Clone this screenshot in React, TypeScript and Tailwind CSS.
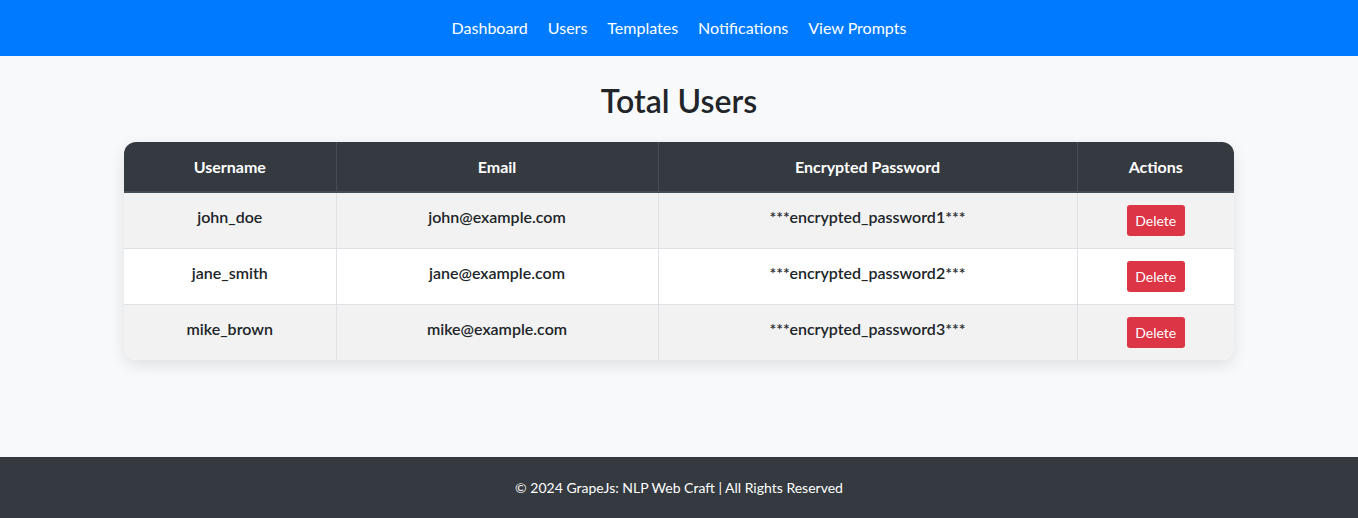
const users = [
  { username: 'john_doe', email: 'john@example.com', password: '***encrypted_password1***' },
  { username: 'jane_smith', email: 'jane@example.com', password: '***encrypted_password2***' },
  { username: 'mike_brown', email: 'mike@example.com', password: '***encrypted_password3***' },
];

const navLinks = ['Dashboard', 'Users', 'Templates', 'Notifications', 'View Prompts'];

export default function App() {
  return (
    <div className="min-h-screen flex flex-col bg-[#f8f9fa] text-[#212529] font-['Lato',sans-serif]">
      {/* Navbar */}
      <nav className="h-[56px] bg-[#007bff] flex items-center justify-center gap-5">
        {navLinks.map((link) => (
          <a key={link} href="#" className="text-white text-[16px] leading-6">
            {link}
          </a>
        ))}
      </nav>

      {/* Main */}
      <main className="flex-1 pt-[26px] pb-[97px]">
        <h2 className="text-center text-[32px] leading-[38px] font-semibold mb-[22px]">Total Users</h2>
        <div className="w-[1110px] mx-auto rounded-xl overflow-hidden shadow-[0_5px_15px_rgba(0,0,0,0.1)] bg-white">
          <table className="w-full border-collapse text-center">
            <thead>
              <tr className="bg-[#343a40] text-white h-[50px] border-b-2 border-[#454d55]">
                <th className="w-[212px] font-bold text-[16px] border-r border-[#454d55]">Username</th>
                <th className="w-[322px] font-bold text-[16px] border-r border-[#454d55]">Email</th>
                <th className="w-[419px] font-bold text-[16px] border-r border-[#454d55]">Encrypted Password</th>
                <th className="font-bold text-[16px]">Actions</th>
              </tr>
            </thead>
            <tbody>
              {users.map((user, i) => (
                <tr
                  key={user.username}
                  className={`h-[56px] ${i > 0 ? 'border-t border-[#dee2e6]' : ''} ${i % 2 === 0 ? 'bg-[#f2f2f2]' : 'bg-white'}`}
                >
                  <td className="font-semibold text-[16px] pb-[6px] border-r border-[#dee2e6]">{user.username}</td>
                  <td className="font-semibold text-[16px] pb-[6px] border-r border-[#dee2e6]">{user.email}</td>
                  <td className="font-semibold text-[16px] pb-[6px] border-r border-[#dee2e6]">{user.password}</td>
                  <td>
                    <button className="bg-[#dc3545] text-white text-[14px] leading-[21px] px-[8.5px] py-[5px] rounded-[3px]">
                      Delete
                    </button>
                  </td>
                </tr>
              ))}
            </tbody>
          </table>
        </div>
      </main>

      {/* Footer */}
      <footer className="h-[61px] bg-[#343a40] text-white text-[14px] flex items-center justify-center">
        © 2024 GrapeJs: NLP Web Craft | All Rights Reserved
      </footer>
    </div>
  );
}
